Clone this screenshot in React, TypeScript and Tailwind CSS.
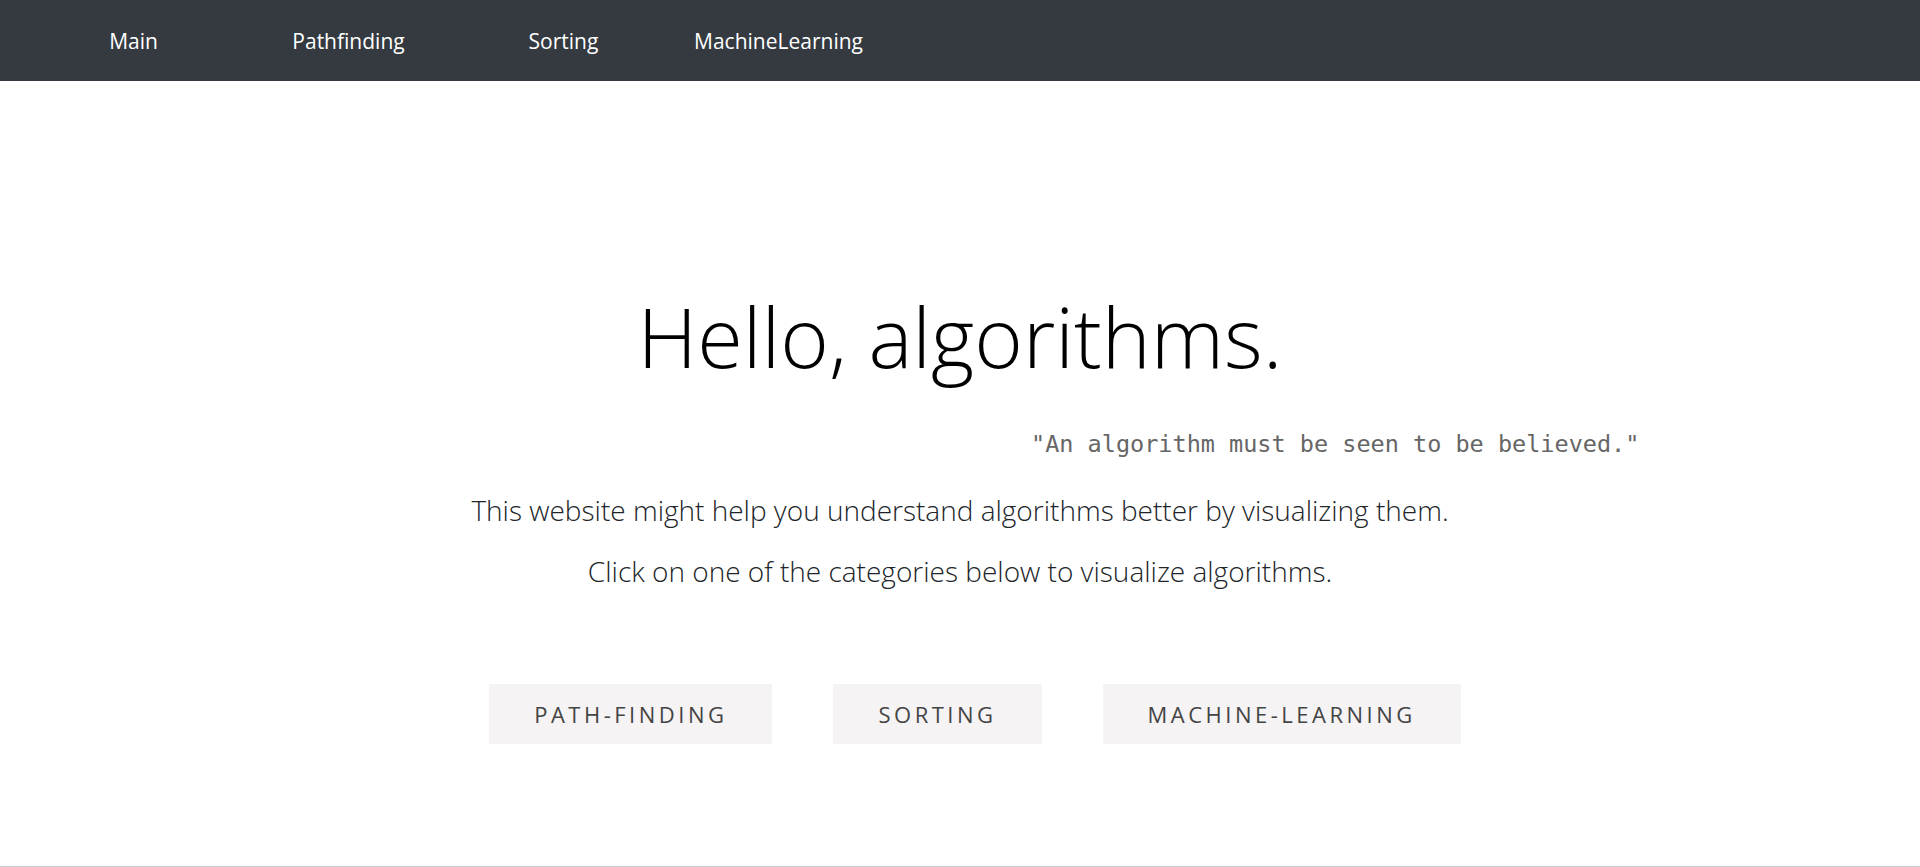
const navLinks = ['Main', 'Pathfinding', 'Sorting', 'MachineLearning'];
const categories = ['PATH-FINDING', 'SORTING', 'MACHINE-LEARNING'];

function NavBar() {
  return (
    <nav className="h-[81px] bg-[#343a40] flex items-center pl-[26px] pt-[2px]">
      {navLinks.map((link) => (
        <a
          key={link}
          href="#"
          className="w-[215px] text-center text-white text-[21px] leading-none"
        >
          {link}
        </a>
      ))}
    </nav>
  );
}

export default function App() {
  return (
    <div className="min-h-[867px] bg-white font-['Open_Sans',sans-serif] text-[#212529] overflow-hidden">
      <NavBar />

      <main className="h-[785px] flex flex-col items-center">
        <h1 className="mt-[213px] text-[83px] font-light leading-none text-black">
          Hello, algorithms.
        </h1>

        <div className="w-full pl-[1031px] mt-[56px]">
          <p className="font-['DejaVu_Sans_Mono',monospace] text-[23.5px] text-[#666] leading-none">
            "An algorithm must be seen to be believed."
          </p>
        </div>

        <p className="mt-[39px] text-[28px] font-light leading-none">
          This website might help you understand algorithms better by visualizing them.
        </p>
        <p className="mt-[33px] text-[28px] font-light leading-none">
          Click on one of the categories below to visualize algorithms.
        </p>

        <div className="mt-[99px] ml-[30px] flex gap-[61px]">
          {categories.map((c) => (
            <button
              key={c}
              className="h-[60px] px-[45px] bg-[#f5f3f4] text-[#444] text-[22px] tracking-[3.5px] leading-none"
            >
              {c}
            </button>
          ))}
        </div>
      </main>

      <div className="h-[1px] bg-[#cccccc]" />
    </div>
  );
}
